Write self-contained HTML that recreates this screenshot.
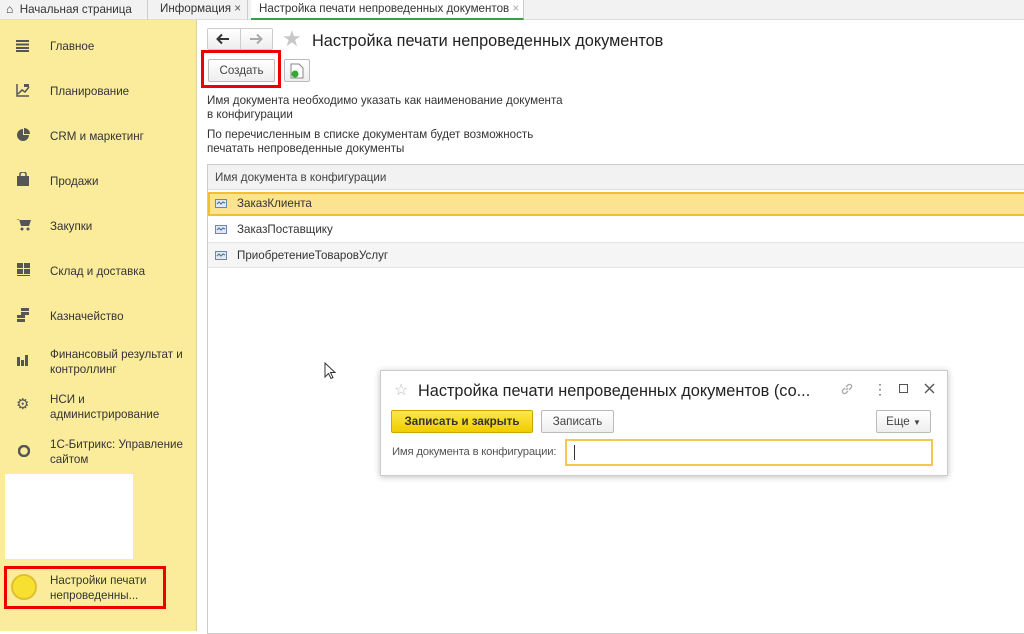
<!DOCTYPE html>
<html><head><meta charset="utf-8"><style>
*{margin:0;padding:0;box-sizing:border-box}
body{width:1024px;height:631px;overflow:hidden;background:#fff;font-family:"Liberation Sans",Arial,sans-serif;font-size:11.6px;color:#333;position:relative}
.abs{position:absolute;white-space:nowrap}
.tabs{left:0;top:0;width:1024px;height:20px;background:#f2f2f2;border-bottom:1px solid #ddd}
.tab{top:0;height:20px;line-height:18px;padding-left:8px;font-size:11.6px;color:#333;border-right:1px solid #ccc}
.side{left:0;top:20px;width:197px;height:611px;background:#fbec9c;border-right:1px solid #d8d0a0}
.mi{left:50px;font-size:11.6px;color:#333;line-height:15px}
.ic{left:16px;width:14px;height:14px;color:#555;font-size:13px;line-height:14px}
.btn{border:1px solid #bbb;border-radius:2px;background:linear-gradient(#fff,#eee);text-align:center;font-size:11.6px;color:#444}
</style></head><body>
<div class="abs tabs"></div>
<div class="abs tab" style="left:0;width:148px;padding-left:6px"><span style="font-size:12px">&#8962;</span>&nbsp;&nbsp;Начальная страница</div>
<div class="abs tab" style="left:152px;width:96px">Информация <span style="color:#555">×</span></div>
<div class="abs tab" style="left:251px;width:273px;background:#fff;border-bottom:2px solid #3b9e4a">Настройка печати непроведенных документов <span style="color:#aaa">×</span></div>

<div class="abs side"></div>
<svg class="abs" style="left:16px;top:40px" width="14" height="12"><g fill="#555"><rect y="0" width="13" height="2"/><rect y="3.5" width="13" height="2"/><rect y="7" width="13" height="2"/><rect y="10" width="13" height="2"/></g></svg>
<div class="abs mi" style="top:39px">Главное</div>
<svg class="abs" style="left:16px;top:83px" width="14" height="14"><path d="M1 1v12h12" stroke="#555" fill="none" stroke-width="1.5"/><path d="M2 11l4-4 3 2 4-5" stroke="#555" fill="none" stroke-width="1.5"/><rect x="8" y="1" width="5" height="3" fill="#555"/></svg>
<div class="abs mi" style="top:84px">Планирование</div>
<svg class="abs" style="left:16px;top:128px" width="14" height="14"><path d="M7 1A6 6 0 1 0 13 7H7Z" fill="#555"/><path d="M8 0A6 6 0 0 1 14 6H8Z" fill="#555"/></svg>
<div class="abs mi" style="top:129px">CRM и маркетинг</div>
<svg class="abs" style="left:17px;top:172px" width="13" height="14"><rect x="0" y="4" width="12" height="10" fill="#555"/><path d="M3 5V2a3 2 0 0 1 6 0v3" stroke="#555" fill="none" stroke-width="1.5"/></svg>
<div class="abs mi" style="top:174px">Продажи</div>
<svg class="abs" style="left:16px;top:218px" width="15" height="13"><path d="M0 1h3l2 7h8l2-6H4" fill="#555"/><circle cx="6" cy="11" r="1.5" fill="#555"/><circle cx="12" cy="11" r="1.5" fill="#555"/></svg>
<div class="abs mi" style="top:219px">Закупки</div>
<svg class="abs" style="left:17px;top:263px" width="14" height="13"><g fill="#555"><rect width="6" height="5"/><rect x="7" width="6" height="5"/><rect y="6" width="6" height="5"/><rect x="7" y="6" width="6" height="5"/><rect y="12" width="13" height="1"/></g></svg>
<div class="abs mi" style="top:264px">Склад и доставка</div>
<svg class="abs" style="left:17px;top:308px" width="13" height="14"><g fill="#555"><rect x="4" y="0" width="8" height="3"/><rect x="4" y="4" width="8" height="3"/><rect x="0" y="7" width="8" height="3"/><rect x="0" y="11" width="8" height="3"/></g></svg>
<div class="abs mi" style="top:309px">Казначейство</div>
<svg class="abs" style="left:17px;top:354px" width="13" height="12"><g fill="#555"><rect x="0" y="3" width="3" height="9"/><rect x="4" y="6" width="3" height="6"/><rect x="8" y="1" width="3" height="11"/></g></svg>
<div class="abs mi" style="top:347px">Финансовый результат и<br>контроллинг</div>
<div class="abs ic" style="top:398px;font-size:15px">⚙</div>
<div class="abs mi" style="top:392px">НСИ и<br>администрирование</div>
<svg class="abs" style="left:18px;top:445px" width="12" height="12"><circle cx="6" cy="6" r="5" fill="none" stroke="#555" stroke-width="2.5"/></svg>
<div class="abs mi" style="top:437px">1С-Битрикс: Управление<br>сайтом</div>
<div class="abs" style="left:5px;top:474px;width:128px;height:85px;background:#fff"></div>
<div class="abs" style="left:4px;top:566px;width:162px;height:43px;border:3px solid #ee0000"></div>
<div class="abs" style="left:11px;top:574px;width:26px;height:26px;border-radius:50%;background:#f8e030;border:2px solid #e0c030"></div>
<div class="abs mi" style="top:573px">Настройки печати<br>непроведенны...</div>

<!-- main -->
<div class="abs btn" style="left:207px;top:28px;width:66px;height:22px;border-color:#ccc"></div>
<div class="abs" style="left:240px;top:29px;width:1px;height:20px;background:#ccc"></div>
<svg class="abs" style="left:216px;top:33px" width="14" height="12"><path d="M13 6H2M6 1.5L1.5 6 6 10.5" stroke="#333" stroke-width="2" fill="none"/></svg>
<svg class="abs" style="left:249px;top:33px" width="14" height="12"><path d="M1 6h11M8 1.5L12.5 6 8 10.5" stroke="#aaa" stroke-width="2" fill="none"/></svg>
<div class="abs" style="left:282px;top:27px;font-size:22px;color:#c8c8c8;line-height:24px">★</div>
<div class="abs" style="left:312px;top:32px;font-size:16.3px;color:#222">Настройка печати непроведенных документов</div>
<div class="abs" style="left:201px;top:50px;width:80px;height:38px;border:3px solid #ee0000"></div>
<div class="abs btn" style="left:208px;top:59px;width:67px;height:23px;line-height:21px">Создать</div>
<div class="abs btn" style="left:284px;top:59px;width:26px;height:23px"><svg width="14" height="16" style="margin-top:3px"><path d="M1 1h8l4 4v10H1Z" fill="#fff" stroke="#888"/><circle cx="5" cy="11" r="3.5" fill="#3a3"/></svg></div>
<div class="abs" style="left:207px;top:94px;line-height:14px">Имя документа необходимо указать как наименование документа<br>в конфигурации</div>
<div class="abs" style="left:207px;top:128px;line-height:14px">По перечисленным в списке документам будет возможность<br>печатать непроведенные документы</div>
<div class="abs" style="left:207px;top:164px;width:830px;height:470px;border:1px solid #ccc"></div>
<div class="abs" style="left:208px;top:165px;width:830px;height:25px;background:#f2f2f2;border-bottom:1px solid #ddd;line-height:25px;padding-left:7px;color:#444">Имя документа в конфигурации</div>
<div class="abs" style="left:208px;top:192px;width:830px;height:24px;background:#fbe390;border:2px solid #f0c030"></div>
<div class="abs" style="left:208px;top:242px;width:830px;height:26px;background:#f5f5f5;border-top:1px solid #e4e4e4;border-bottom:1px solid #e4e4e4"></div>
<svg class="abs" style="left:215px;top:199px" width="12" height="9"><rect x=".5" y=".5" width="11" height="8" fill="#dfe8f3" stroke="#6a87b0"/><path d="M2 5l2-2 2 2 2-2 2 1" stroke="#4a6a98" fill="none"/></svg>
<div class="abs" style="left:237px;top:197px">ЗаказКлиента</div>
<svg class="abs" style="left:215px;top:225px" width="12" height="9"><rect x=".5" y=".5" width="11" height="8" fill="#dfe8f3" stroke="#6a87b0"/><path d="M2 5l2-2 2 2 2-2 2 1" stroke="#4a6a98" fill="none"/></svg>
<div class="abs" style="left:237px;top:223px">ЗаказПоставщику</div>
<svg class="abs" style="left:215px;top:251px" width="12" height="9"><rect x=".5" y=".5" width="11" height="8" fill="#dfe8f3" stroke="#6a87b0"/><path d="M2 5l2-2 2 2 2-2 2 1" stroke="#4a6a98" fill="none"/></svg>
<div class="abs" style="left:237px;top:249px">ПриобретениеТоваровУслуг</div>
<svg class="abs" style="left:324px;top:362px" width="12" height="18"><path d="M1 1v14l3.5-3.5 2.5 5 2-1-2.5-5H11Z" fill="#fff" stroke="#333"/></svg>

<!-- dialog -->
<div class="abs" style="left:380px;top:370px;width:568px;height:106px;background:#fff;border:1px solid #ccc;box-shadow:0 1px 6px rgba(0,0,0,.25)"></div>
<div class="abs" style="left:394px;top:380px;font-size:16px;color:#bbb">☆</div>
<div class="abs" style="left:418px;top:382px;font-size:16.3px;color:#222">Настройка печати непроведенных документов (со...</div>
<svg class="abs" style="left:840px;top:382px" width="14" height="14"><path d="M6 8l2-2M5 6L3 8a2 2 0 0 0 3 3l2-2M9 8l2-2a2 2 0 0 0-3-3L6 5" stroke="#aaa" stroke-width="1.3" fill="none"/></svg>
<div class="abs" style="left:873px;top:381px;font-size:14px;color:#666">⋮</div>
<div class="abs" style="left:899px;top:384px;width:9px;height:9px;border:1.5px solid #555"></div>
<svg class="abs" style="left:924px;top:383px" width="11" height="11"><path d="M1 1l9 9M10 1l-9 9" stroke="#555" stroke-width="1.4"/></svg>
<div class="abs" style="left:391px;top:410px;width:142px;height:23px;border:1px solid #c9a800;border-radius:2px;background:linear-gradient(#fce84a,#f0cc00);text-align:center;line-height:21px;font-weight:bold;color:#333">Записать и закрыть</div>
<div class="abs btn" style="left:541px;top:410px;width:73px;height:23px;line-height:21px">Записать</div>
<div class="abs btn" style="left:876px;top:410px;width:55px;height:23px;line-height:21px">Еще <span style="font-size:8px">▼</span></div>
<div class="abs" style="left:392px;top:446px;color:#555;font-size:11.3px;letter-spacing:-0.2px">Имя документа в конфигурации:</div>
<div class="abs" style="left:565px;top:439px;width:368px;height:27px;border:2px solid #f2c94c;background:#fff"></div>
<div class="abs" style="left:574px;top:445px;width:1px;height:15px;background:#333"></div>
</body></html>
